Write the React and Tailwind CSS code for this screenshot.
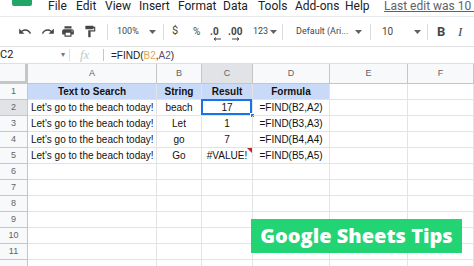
import React from "react";
import { MdUndo, MdRedo, MdPrint, MdFormatPaint } from "react-icons/md";

const Caret = () => (
  <svg width="7" height="4" viewBox="0 0 7 4" className="shrink-0">
    <path d="M0 0 L7 0 L3.5 4 Z" fill="#5f6368" />
  </svg>
);

const Divider = () => <div className="w-px h-[16px] bg-[#dadce0] shrink-0" />;

const menu = [
  ["File", 28],
  ["Edit", 29],
  ["View", 34],
  ["Insert", 39],
  ["Format", 45],
  ["Data", 35],
  ["Tools", 37],
  ["Add-ons", 50],
  ["Help", 39],
];

const cols = ["A", "B", "C", "D", "E", "F"];
const rows = [
  ["Text to Search", "String", "Result", "Formula", "", ""],
  ["Let's go to the beach today!", "beach", "17", "=FIND(B2,A2)", "", ""],
  ["Let's go to the beach today!", "Let", "1", "=FIND(B3,A3)", "", ""],
  ["Let's go to the beach today!", "go", "7", "=FIND(B4,A4)", "", ""],
  ["Let's go to the beach today!", "Go", "#VALUE!", "=FIND(B5,A5)", "", ""],
];
while (rows.length < 12) rows.push(["", "", "", "", "", ""]);

const gridCols = "grid grid-cols-[28px_129px_45px_51px_77px_78px_1fr]";

export default function App() {
  return (
    <div className="relative w-[474px] h-[266px] overflow-hidden bg-white font-['Roboto',sans-serif] text-[#202124]">
      {/* Menu bar */}
      <div className="flex items-start h-[17px] border-b border-[#e8eaed] whitespace-nowrap overflow-hidden">
        <div className="ml-[12px] w-[20px] h-[6px] bg-[#23a566] rounded-b-[2px] shrink-0" />
        <div className="ml-[16px] flex text-[12px] leading-[12px] shrink-0">
          {menu.map(([t, w]) => (
            <span key={t} style={{ width: w }} className="shrink-0">
              {t}
            </span>
          ))}
          <span className="text-[#5f6368] underline shrink-0">Last edit was 10 m</span>
        </div>
      </div>

      {/* Toolbar */}
      <div className="flex items-center h-[30px] pl-[18px] border-b border-[#e0e0e0] text-[#444746] whitespace-nowrap overflow-hidden">
        <span className="w-[14px] shrink-0 flex justify-center"><MdUndo size={15} /></span>
        <span className="ml-[9px] w-[14px] shrink-0 flex justify-center"><MdRedo size={15} /></span>
        <span className="ml-[6px] w-[14px] shrink-0 flex justify-center"><MdPrint size={15} /></span>
        <span className="ml-[8px] w-[14px] shrink-0 flex justify-center"><MdFormatPaint size={15} /></span>
        <div className="ml-[10px]"><Divider /></div>
        <span className="ml-[9px] w-[28px] shrink-0 text-[9px]">100%</span>
        <span className="ml-[4px] shrink-0"><Caret /></span>
        <div className="ml-[7px]"><Divider /></div>
        <span className="ml-[8px] w-[14px] shrink-0 text-[11px]">$</span>
        <span className="ml-[7px] w-[14px] shrink-0 text-[10px]">%</span>
        <span className="ml-[3px] w-[16px] shrink-0 relative text-[10px] font-bold leading-[10px]">
          .0
          <svg width="8" height="4" viewBox="0 0 8 4" className="absolute left-[3px] top-[10px]">
            <path d="M8 2 H1.5 M3 0.5 L1 2 L3 3.5" stroke="#444" strokeWidth="1" fill="none" />
          </svg>
        </span>
        <span className="ml-[2px] w-[18px] shrink-0 relative text-[10px] font-bold leading-[10px]">
          .00
          <svg width="8" height="4" viewBox="0 0 8 4" className="absolute left-[4px] top-[10px]">
            <path d="M0 2 H6.5 M5 0.5 L7 2 L5 3.5" stroke="#444" strokeWidth="1" fill="none" />
          </svg>
        </span>
        <span className="ml-[7px] w-[16px] shrink-0 text-[9px]">123</span>
        <span className="ml-[1px] shrink-0"><Caret /></span>
        <div className="ml-[5px]"><Divider /></div>
        <span className="ml-[13px] w-[52px] shrink-0 text-[9px]">Default (Ari...</span>
        <span className="ml-[7px] shrink-0"><Caret /></span>
        <div className="ml-[8px]"><Divider /></div>
        <span className="ml-[11px] w-[31px] shrink-0 text-[10px]">10</span>
        <span className="ml-[1px] shrink-0"><Caret /></span>
        <div className="ml-[6px]"><Divider /></div>
        <span className="ml-[9px] w-[14px] shrink-0 text-[13px] font-bold">B</span>
        <span className="ml-[7px] shrink-0 text-[13px] italic font-['Liberation_Serif',serif]">I</span>
      </div>

      {/* Formula bar */}
      <div className="flex items-center h-[17px] border-b border-[#e0e0e0] whitespace-nowrap">
        <span className="w-[61px] shrink-0 text-[11px] text-[#202124]">C2</span>
        <span className="text-[8px] text-[#777] shrink-0">▾</span>
        <div className="ml-[4px] w-px h-[12px] bg-[#e0e0e0] shrink-0" />
        <span className="ml-[10px] w-[14px] shrink-0 text-[13px] italic text-[#c4c7c5] font-['Liberation_Serif',serif]">fx</span>
        <div className="ml-[9px] w-px h-[12px] bg-[#c4c7c5] shrink-0" />
        <span className="ml-[7px] text-[10px] font-['Liberation_Sans',sans-serif] text-[#202124]">
          =FIND(<span className="text-[#e0a55a]">B2</span>,<span className="text-[#5b4f7d]">A2</span>)
        </span>
      </div>

      {/* Grid */}
      <div className="font-['Liberation_Sans',sans-serif]">
        <div className={`${gridCols} h-[20px]`}>
          <div className="bg-[#f8f9fa] border-r-[3px] border-b-[3px] border-[#c4c7c5]" />
          {cols.map((c) => (
            <div
              key={c}
              className={`flex items-center justify-center text-[9px] text-[#5f6368] border-r border-b border-[#c4c7c5] ${
                c === "C" ? "bg-[#e1e3e6]" : "bg-[#f8f9fa]"
              }`}
            >
              {c}
            </div>
          ))}
        </div>
        {rows.map((r, i) => (
          <div key={i} className={`${gridCols} h-[16px]`}>
            <div
              className={`flex items-center justify-center text-[9px] text-[#5f6368] border-r border-b border-[#c4c7c5] ${
                i === 1 ? "bg-[#e1e3e6]" : "bg-[#f8f9fa]"
              }`}
            >
              {i < 11 ? i + 1 : ""}
            </div>
            {r.map((v, j) => {
              const header = i === 0 && j < 4;
              const align = j === 0 && i > 0 ? "justify-start pl-[3px]" : "justify-center";
              return (
                <div
                  key={j}
                  className={`relative flex items-center ${align} text-[10px] leading-none whitespace-nowrap border-r border-b border-[#e2e3e3] ${
                    header ? "bg-[#c9daf8] font-bold text-[#111]" : "text-[#111]"
                  }`}
                >
                  {v}
                  {i === 1 && j === 2 && (
                    <>
                      <div className="absolute -left-[1px] -top-[1px] right-0 bottom-0 border-2 border-[#1a73e8]" />
                      <div className="absolute -right-[3px] -bottom-[3px] w-[5px] h-[5px] bg-[#1a73e8] border border-white" />
                    </>
                  )}
                  {i === 4 && j === 2 && (
                    <div className="absolute right-0 top-0 w-0 h-0 border-l-[5px] border-l-transparent border-t-[5px] border-t-[#c5221f]" />
                  )}
                </div>
              );
            })}
          </div>
        ))}
      </div>

      {/* Banner */}
      <div className="absolute left-[251px] top-[219px] w-[211px] h-[34px] bg-[#22d473] flex items-center justify-center">
        <span className="text-white font-extrabold text-[20px] font-['Open_Sans',sans-serif]">
          Google Sheets Tips
        </span>
      </div>
    </div>
  );
}
